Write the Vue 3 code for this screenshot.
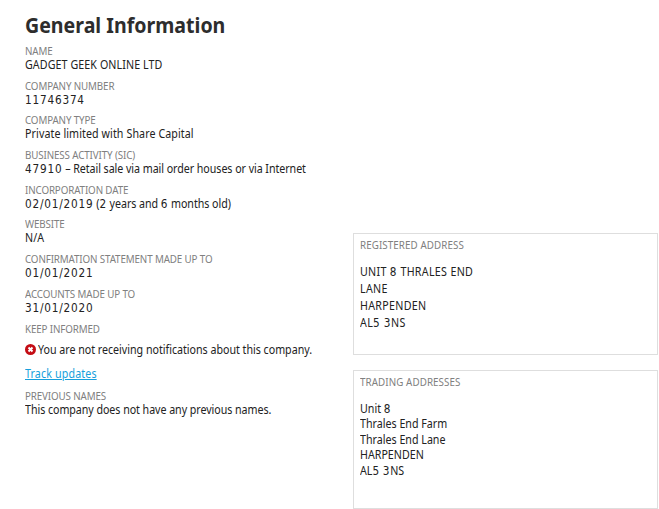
<template>
  <div class="company">
    <h1 class="title">General Information</h1>
    <div class="columns">
      <dl class="details">
        <div v-for="item in details" :key="item.label" class="item">
          <dt class="label">{{ item.label }}</dt>
          <dd class="value" :class="{ caps: item.caps }">
            <span v-for="(part, index) in split(item.value)" :key="index" :class="{ digits: index % 2 }">{{ part }}</span>
          </dd>
        </div>
        <div class="informed">
          <dt class="label">KEEP INFORMED</dt>
          <dd class="notice">
            <svg class="icon" viewBox="0 0 22 22">
              <circle cx="11" cy="11" r="11" fill="#c40d15" />
              <path d="M7 7 L15 15 M15 7 L7 15" stroke="#fff" stroke-width="4" />
            </svg>
            <span class="narrow">You are not receiving notifications about this company.</span>
          </dd>
          <dd class="track"><a href="#" class="link">Track updates</a></dd>
        </div>
        <div class="item">
          <dt class="label">PREVIOUS NAMES</dt>
          <dd class="value">This company does not have any previous names.</dd>
        </div>
      </dl>
      <div class="addresses">
        <div class="box registered">
          <div class="label">REGISTERED ADDRESS</div>
          <div class="lines">
            <div v-for="line in registered" :key="line">
              <span v-for="(part, index) in split(line)" :key="index" :class="{ digits: index % 2 }">{{ part }}</span>
            </div>
          </div>
        </div>
        <div class="box trading">
          <div class="label">TRADING ADDRESSES</div>
          <div class="lines">
            <div v-for="line in trading" :key="line">
              <span v-for="(part, index) in split(line)" :key="index" :class="{ digits: index % 2 }">{{ part }}</span>
            </div>
          </div>
        </div>
      </div>
    </div>
  </div>
</template>

<script setup>
const details = [
  { label: 'NAME', value: 'GADGET GEEK ONLINE LTD', caps: true },
  { label: 'COMPANY NUMBER', value: '11746374' },
  { label: 'COMPANY TYPE', value: 'Private limited with Share Capital', caps: true },
  { label: 'BUSINESS ACTIVITY (SIC)', value: '47910 – Retail sale via mail order houses or via Internet' },
  { label: 'INCORPORATION DATE', value: '02/01/2019 (2 years and 6 months old)' },
  { label: 'WEBSITE', value: 'N/A', caps: true },
  { label: 'CONFIRMATION STATEMENT MADE UP TO', value: '01/01/2021' },
  { label: 'ACCOUNTS MADE UP TO', value: '31/01/2020' }
];

const registered = ['UNIT 8 THRALES END', 'LANE', 'HARPENDEN', 'AL5 3NS'];
const trading    = ['Unit 8', 'Thrales End Farm', 'Thrales End Lane', 'HARPENDEN', 'AL5 3NS'];

// numbers and dates land on the odd indexes
function split(value) {
  return value.split(/(\d[\d/]*)/);
}
</script>

<style>
body {
  background: #fff;
}
</style>

<style scoped>
.company {
  box-sizing: border-box;
  width: 659px;
  height: 509px;
  padding: 8px 1px 0 25px;
  overflow: hidden;
  color: #222;
  font-family: "Noto Sans", sans-serif;
  font-size: 12px;
  white-space: nowrap;
}

.title, .label, .value, .narrow, .track, .lines {
  transform: scaleX(0.89);
  transform-origin: left;
}

.title {
  margin: 0;
  height: 37px;
  color: #2d2d2d;
  font-size: 22px;
  line-height: 32px;
  font-weight: 700;
}

.columns {
  display: flex;
}

.details {
  width: 328px;
  margin: 0;
}

dd {
  margin: 0;
}

.item {
  height: 34.7px;
}

.label {
  height: 13px;
  color: #808080;
  font-size: 11px;
  line-height: 11px;
  letter-spacing: -0.14px;
}

.value {
  line-height: 14px;
  white-space: pre;
  letter-spacing: -0.06px;
}

.caps {
  letter-spacing: 0.1px;
}

.digits {
  font-family: "DejaVu Sans", sans-serif;
  font-size: 11.8px;
  line-height: 1;
  letter-spacing: 0.9px;
}

.informed {
  height: 67px;
}

.notice {
  display: flex;
  align-items: center;
  gap: 2px;
  height: 28px;
  letter-spacing: -0.02px;
}

.icon {
  flex: none;
  width: 11px;
  height: 11px;
}

.track {
  line-height: 20px;
  letter-spacing: 0.15px;
}

.link {
  color: #169fdc;
}

.addresses {
  flex: 1;
  padding-top: 188px;
}

.box {
  box-sizing: border-box;
  padding: 5px 6px 0;
  border: 1px solid #dedede;
}

.box .label {
  letter-spacing: 0.1px;
}

.lines {
  white-space: pre;
}

.registered {
  height: 122px;
  margin-bottom: 15px;
}

.trading {
  height: 139px;
}

.registered .lines {
  padding-top: 11px;
  line-height: 17px;
  letter-spacing: 0.35px;
}

.trading .lines {
  padding-top: 12px;
  line-height: 15.4px;
}
</style>
